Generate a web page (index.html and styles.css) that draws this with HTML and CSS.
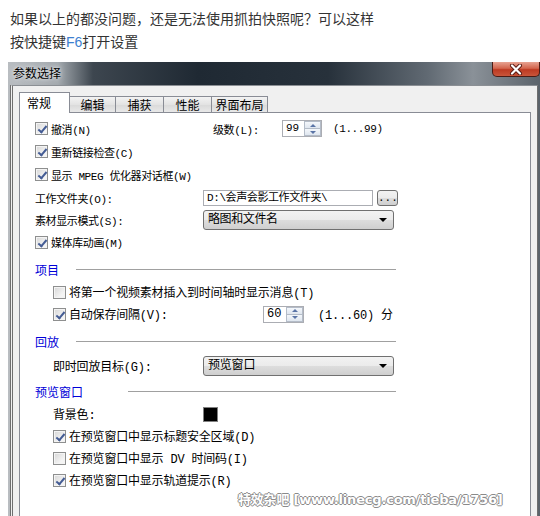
FILE: index.html
```html
<!DOCTYPE html>
<html lang="zh-CN">
<head>
    <meta charset="UTF-8">
    <title>参数选择</title>
    <link rel="stylesheet" href="styles.css">
</head>
<body>
    <div class="intro">
        <p>如果以上的都没问题，还是无法使用抓拍快照呢？可以这样</p>
        <p>按快捷键<span class="key">F6</span>打开设置</p>
    </div>

    <div class="dialog">
        <div class="titlebar">
            <span class="title">参数选择</span>
            <button class="close-btn">
                <svg width="14" height="11" viewBox="0 0 14 11">
                    <path d="M3 1.5 L11 9.5 M11 1.5 L3 9.5" stroke="#5a1a12" stroke-width="4" stroke-linecap="round"/>
                    <path d="M3 1.5 L11 9.5 M11 1.5 L3 9.5" stroke="#fff" stroke-width="2.2" stroke-linecap="round"/>
                </svg>
            </button>
        </div>

        <div class="dialog-body">
            <div class="tabs">
                <div class="tab active">常规</div>
                <div class="tab tab-edit">编辑</div>
                <div class="tab">捕获</div>
                <div class="tab">性能</div>
                <div class="tab tab-layout">界面布局</div>
            </div>

            <div class="panel">
                <!-- general options -->
                <div class="group-top">
                    <div class="row">
                        <label class="check check-undo"><span class="box checked"></span>撤消(N)</label>
                        <span class="level-label">级数(L):</span>
                        <div class="spinner">
                            <span class="spin-value">99</span>
                            <span class="spin-btns"><i class="up"></i><i class="down"></i></span>
                        </div>
                        <span class="range">(1...99)</span>
                    </div>
                    <div class="row">
                        <label class="check"><span class="box checked"></span>重新链接检查(C)</label>
                    </div>
                    <div class="row">
                        <label class="check"><span class="box checked"></span>显示 MPEG 优化器对话框(W)</label>
                    </div>
                    <div class="row">
                        <span class="field-label">工作文件夹(O):</span>
                        <div class="text-input">D:\会声会影工作文件夹\</div>
                        <button class="browse-btn">...</button>
                    </div>
                    <div class="row row-short">
                        <span class="field-label">素材显示模式(S):</span>
                        <div class="select">略图和文件名</div>
                    </div>
                    <div class="row row-short">
                        <label class="check"><span class="box checked"></span>媒体库动画(M)</label>
                    </div>
                </div>

                <!-- project -->
                <div class="section">项目<span class="rule"></span></div>
                <div class="group">
                    <div class="row row-short">
                        <label class="check"><span class="box"></span>将第一个视频素材插入到时间轴时显示消息(T)</label>
                    </div>
                    <div class="row row-short">
                        <label class="check check-autosave"><span class="box checked"></span>自动保存间隔(V):</label>
                        <div class="spinner spinner-wide">
                            <span class="spin-value">60</span>
                            <span class="spin-btns"><i class="up"></i><i class="down"></i></span>
                        </div>
                        <span class="range">(1...60) 分</span>
                    </div>
                </div>

                <!-- playback -->
                <div class="section">回放<span class="rule"></span></div>
                <div class="group group-playback">
                    <div class="row row-short">
                        <span class="field-label field-label-sub">即时回放目标(G):</span>
                        <div class="select">预览窗口</div>
                    </div>
                </div>

                <!-- preview window -->
                <div class="section section-preview">预览窗口<span class="rule rule-far"></span></div>
                <div class="group">
                    <div class="row row-short">
                        <span class="field-label field-label-sub">背景色:</span>
                        <span class="swatch"></span>
                    </div>
                    <div class="row row-short">
                        <label class="check"><span class="box checked"></span>在预览窗口中显示标题安全区域(D)</label>
                    </div>
                    <div class="row row-short">
                        <label class="check"><span class="box"></span>在预览窗口中显示 DV 时间码(I)</label>
                    </div>
                    <div class="row row-short">
                        <label class="check"><span class="box checked"></span>在预览窗口中显示轨道提示(R)</label>
                    </div>
                </div>
            </div>
        </div>
    </div>

    <div class="watermark">特效杂吧 [www.linecg.com/tieba/1756]</div>
</body>
</html>
```

FILE: styles.css
```css
* {
    margin: 0;
    padding: 0;
    box-sizing: border-box;
}

body {
    width: 540px;
    height: 516px;
    overflow: hidden;
    position: relative;
    background: #fff;
    color: #000;
    font-family: "Noto Sans CJK SC", sans-serif;
}

.intro {
    padding: 7px 0 0 10px;
    font-size: 14px;
    line-height: 23px;
    color: #333;
}

.intro .key {
    color: #3d7fd0;
    font-family: "Liberation Sans", sans-serif;
}

/* window */
.dialog {
    margin: 8px 0 0 8px;
    width: 532px;
    height: 470px;
    background: linear-gradient(to right, #b9bdc1 0, #a3a9ae 50px, #3d464f 85px, #1f2933 190px, #27313b 320px, #616a73 420px, #8a9198 465px, #5b636b 532px);
}

.titlebar {
    display: flex;
    align-items: flex-start;
    height: 23px;
}

.title {
    padding-left: 5px;
    font-size: 12px;
    line-height: 22px;
    color: #000;
    text-shadow: 0 0 6px #e8eaec, 0 0 3px #e8eaec;
}

.close-btn {
    margin-left: auto;
    width: 48px;
    height: 15px;
    border: 1px solid #4b1c15;
    border-top: none;
    border-radius: 0 0 5px 5px;
    background: linear-gradient(#e7a392 0, #d3654d 45%, #bd3a22 55%, #c9553a 100%);
    display: flex;
    align-items: center;
    justify-content: center;
}

.dialog-body {
    margin: 0 2px;
    height: 447px;
    background: #f0f0f0;
    border-top: 1px solid #8b8f94;
    border-left: 3px double #6f6f6f;
    border-right: 1px solid #6f6f6f;
    padding: 6px 6px 0 6px;
}

/* tabs */
.tabs {
    display: flex;
    align-items: flex-end;
    height: 21px;
    margin-bottom: -1px;
    position: relative;
    z-index: 1;
    font-size: 12px;
}

.tab {
    width: 48px;
    height: 16px;
    margin-bottom: 1px;
    border: 1px solid #898c95;
    border-bottom: none;
    border-left: none;
    background: linear-gradient(#f3f3f3, #e3e3e3 50%, #d9d9d9 51%, #e8e8e8);
    text-align: center;
    line-height: 15px;
}

.tab-edit {
    width: 46px;
}

.tab-layout {
    width: 56px;
}

.tab.active {
    width: 51px;
    height: 21px;
    margin-bottom: 0;
    border-left: 1px solid #898c95;
    background: #fff;
    line-height: 20px;
    text-align: left;
    padding-left: 7px;
}

/* page */
.panel {
    height: 420px;
    background: #fff;
    border: 1px solid #898c95;
    padding: 4px 0 0 15px;
    font-family: "Liberation Mono", "Noto Sans CJK SC", monospace;
}

.group-top {
    font-size: 11px;
    letter-spacing: -0.4px;
}

.group-top .row {
    height: 23px;
}

.group-top .row-short {
    height: 22px;
}

.group {
    font-size: 12px;
    letter-spacing: -0.2px;
    padding-left: 18px;
}

.row {
    display: flex;
    align-items: center;
    height: 22px;
    white-space: nowrap;
}

.check {
    display: flex;
    align-items: center;
    gap: 3px;
}

.check-undo {
    width: 178px;
}

.check-autosave {
    width: 210px;
}

.box {
    width: 13px;
    height: 13px;
    border: 1px solid #8e8f8f;
    background: linear-gradient(135deg, #d6d6d6, #f4f4f4 70%);
    box-shadow: inset 0 0 0 1px #f4f4f4;
    position: relative;
}

.box.checked::after {
    content: "";
    position: absolute;
    left: 4px;
    top: 1px;
    width: 3px;
    height: 7px;
    border: solid #445c94;
    border-width: 0 2px 2px 0;
    transform: rotate(40deg);
}

.level-label {
    width: 69px;
}

.field-label {
    width: 168px;
}

.field-label-sub {
    width: 150px;
}

.range {
    margin-left: 11px;
}

.spinner {
    display: flex;
    width: 40px;
    height: 17px;
    border: 1px solid #abadb3;
    background: #fff;
    letter-spacing: 0;
}

.spinner-wide {
    width: 41px;
}

.spinner-wide + .range {
    margin-left: 14px;
}

.spin-value {
    flex: 1;
    padding-left: 3px;
    line-height: 15px;
}

.spin-btns {
    width: 17px;
    display: flex;
    flex-direction: column;
}

.spin-btns i {
    flex: 1;
    display: flex;
    align-items: center;
    justify-content: center;
    border: 1px solid #b4bcc8;
    background: linear-gradient(#f4f7fb, #dfe6ef);
}

.spin-btns i + i {
    border-top: none;
}

.up::after,
.down::after {
    content: "";
    border: 3px solid transparent;
}

.up::after {
    border-top: none;
    border-bottom-color: #5a74a6;
}

.down::after {
    border-bottom: none;
    border-top-color: #5a74a6;
}

.text-input {
    width: 170px;
    height: 16px;
    border: 1px solid #abadb3;
    background: #fff;
    padding-left: 3px;
    line-height: 14px;
}

.browse-btn {
    margin-left: 4px;
    width: 21px;
    height: 16px;
    border: 1px solid #707070;
    border-radius: 3px;
    background: linear-gradient(#f2f2f2, #ebebeb 50%, #dddddd 51%, #cfcfcf);
    font: 11px "Liberation Mono", monospace;
    line-height: 12px;
}

.select {
    width: 191px;
    height: 20px;
    border: 1px solid #707070;
    border-radius: 3px;
    background: linear-gradient(#f2f2f2, #ebebeb 50%, #dddddd 51%, #cfcfcf);
    padding-left: 4px;
    font-size: 12px;
    line-height: 18px;
    position: relative;
}

.select::after {
    content: "";
    position: absolute;
    right: 6px;
    top: 7px;
    border: 4px solid transparent;
    border-bottom: none;
    border-top-color: #000;
}

.swatch {
    width: 15px;
    height: 15px;
    background: #000;
    border: 1px solid #808080;
}

/* section headings */
.section {
    display: flex;
    align-items: center;
    width: 361px;
    height: 23px;
    margin-top: 5px;
    color: #0000d8;
    font-size: 12px;
    font-family: "Noto Sans CJK SC", sans-serif;
}

.section-preview {
    margin-top: 3px;
}

.group-playback {
    margin-top: 2px;
}

.rule {
    flex: 1;
    height: 1px;
    margin-left: 17px;
    background: #a0a0a0;
}

.rule-far {
    margin-left: 45px;
}

.watermark {
    position: absolute;
    left: 238px;
    top: 489px;
    font: bold 13px "DejaVu Sans", "Noto Sans CJK SC", sans-serif;
    color: #fff;
    letter-spacing: -0.2px;
    text-shadow: 1px 0 #8a8a8a, -1px 0 #8a8a8a, 0 1px #8a8a8a, 0 -1px #8a8a8a;
}
```
